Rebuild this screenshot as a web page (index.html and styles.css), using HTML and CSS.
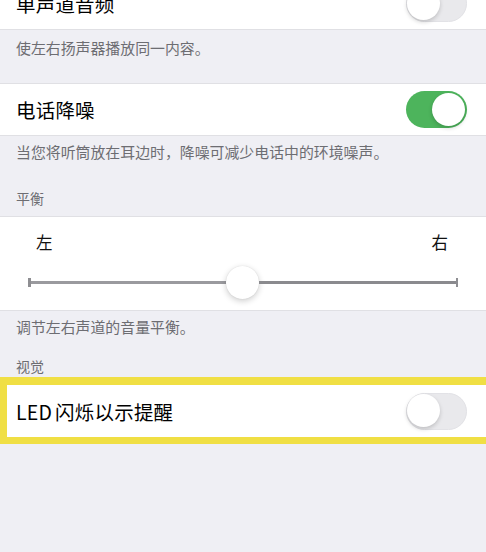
FILE: index.html
```html
<!DOCTYPE html>
<html lang="zh">
<head>
<meta charset="utf-8">
<link rel="stylesheet" href="styles.css">
</head>
<body>
<div class="page">
  <div class="cell first">
    <span class="label">单声道音频</span>
    <span class="toggle off"><span class="knob"></span></span>
  </div>
  <div class="footer f1">使左右扬声器播放同一内容。</div>

  <div class="cell">
    <span class="label">电话降噪</span>
    <span class="toggle on"><span class="knob"></span></span>
  </div>
  <div class="footer f2">当您将听筒放在耳边时，降噪可减少电话中的环境噪声。</div>
  <div class="header h1">平衡</div>

  <div class="slider-cell">
    <div class="ends"><span>左</span><span>右</span></div>
    <div class="track">
      <span class="cap"></span>
      <span class="line left"></span>
      <span class="thumb"></span>
      <span class="line right"></span>
      <span class="cap"></span>
    </div>
  </div>
  <div class="footer f3">调节左右声道的音量平衡。</div>
  <div class="header h2">视觉</div>

  <div class="highlight">
    <div class="cell inner">
      <span class="label"><span class="latin">LED</span>闪烁以示提醒</span>
      <span class="toggle off"><span class="knob"></span></span>
    </div>
  </div>
</div>
</body>
</html>
```
FILE: styles.css
```css
html, body {
  margin: 0;
  padding: 0;
  background: #efeff4;
  width: 486px;
  height: 552px;
  overflow: hidden;
}
.page {
  font-family: "Noto Sans CJK SC", "Liberation Sans", sans-serif;
  display: flex;
  flex-direction: column;
}
.cell {
  background: #fff;
  height: 51px;
  display: flex;
  align-items: center;
  justify-content: space-between;
  padding: 0 19px 0 16px;
  border-top: 1px solid #e0e0e4;
  border-bottom: 1px solid #e0e0e4;
}
.cell.first {
  margin-top: -22px;
  border-top: none;
}
.label {
  font-size: 19.5px;
  color: #000;
  letter-spacing: 0.2px;
}
.latin {
  margin-right: 3px;
}
.toggle {
  width: 61px;
  height: 37px;
  border-radius: 19px;
  box-sizing: border-box;
  position: relative;
  display: block;
}
.toggle.off {
  background: #e9e9ec;
  border: 1.5px solid #e2e2e6;
}
.toggle.on {
  background: #4db45c;
}
.knob {
  position: absolute;
  top: 2px;
  width: 33px;
  height: 33px;
  border-radius: 50%;
  background: #fff;
  box-shadow: 0 2px 4px rgba(0,0,0,0.18);
}
.toggle.off .knob {
  left: 0px;
  top: 0.5px;
}
.toggle.on .knob {
  right: 2px;
}
.footer, .header {
  font-size: 14.9px;
  color: #6d6d72;
  padding-left: 16px;
  line-height: 20px;
}
.f1 { padding-top: 8px; height: 25px; padding-bottom: 20px; }
.f2 { padding-top: 6px; }
.header { font-size: 14px; }
.h1 { padding-top: 26px; padding-bottom: 8px; }
.slider-cell {
  background: #fff;
  height: 95px;
  border-top: 1px solid #e0e0e4;
  border-bottom: 1px solid #e0e0e4;
  box-sizing: border-box;
  padding: 14px 28px 0 28px;
}
.ends {
  display: flex;
  justify-content: space-between;
  font-size: 16.5px;
  color: #111;
  padding: 0 10px 0 8px;
  line-height: 22px;
}
.track {
  display: flex;
  align-items: center;
  margin-top: 12px;
  height: 34px;
}
.cap {
  width: 2.5px;
  height: 9px;
  background: #8e8e92;
}
.line {
  height: 3px;
  background: #9a9a9e;
}
.line.left { width: 195px; }
.line.right { flex: 1; background: #8a8a8e; }
.thumb {
  width: 33px;
  height: 33px;
  border-radius: 50%;
  background: #fff;
  box-shadow: 0 2px 6px rgba(0,0,0,0.2), 0 0 1px rgba(0,0,0,0.15);
}
.f3 { padding-top: 6px; }
.h2 { padding-top: 19px; padding-bottom: 0; }
.highlight {
  margin-top: 1px;
  border: 8px solid #f0df44;
  border-right: none;
  border-bottom-width: 7px;
  border-left-width: 7px;
}
.cell.inner {
  border: none;
  height: 52px;
  padding-left: 9px;
  padding-right: 19px;
}
```
